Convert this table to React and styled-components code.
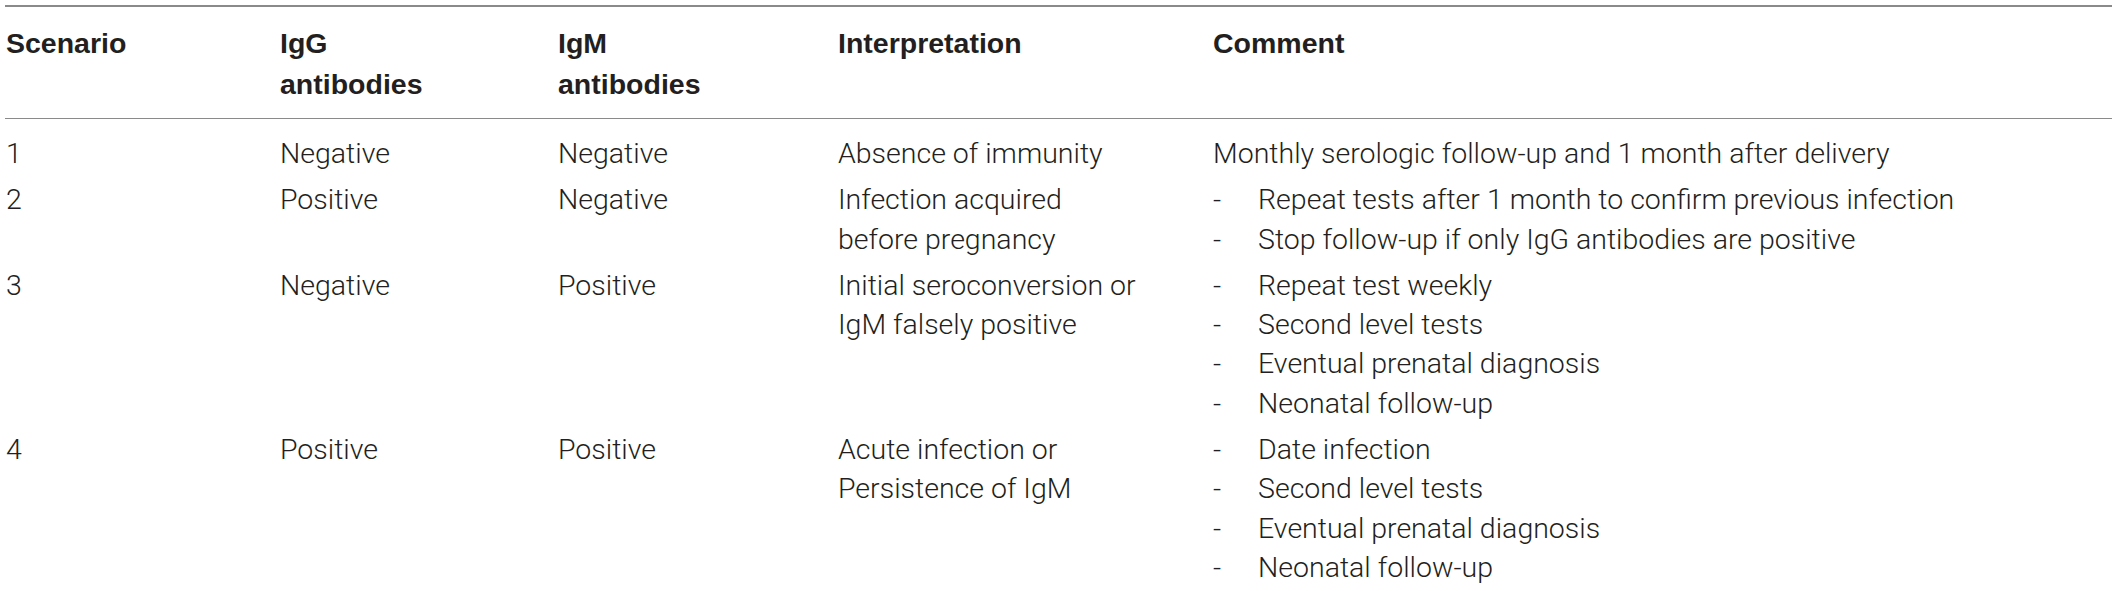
import styled, { createGlobalStyle } from 'styled-components';

const GlobalStyle = createGlobalStyle`
  html, body {
    margin: 0;
    padding: 0;
    background: #fff;
  }
`;

const rows = [
  {
    scenario: '1',
    igg: 'Negative',
    igm: 'Negative',
    interpretation: ['Absence of immunity'],
    comment: 'Monthly serologic follow-up and 1 month after delivery',
  },
  {
    scenario: '2',
    igg: 'Positive',
    igm: 'Negative',
    interpretation: ['Infection acquired', 'before pregnancy'],
    comment: [
      'Repeat tests after 1 month to confirm previous infection',
      'Stop follow-up if only IgG antibodies are positive',
    ],
  },
  {
    scenario: '3',
    igg: 'Negative',
    igm: 'Positive',
    interpretation: ['Initial seroconversion or', 'IgM falsely positive'],
    comment: [
      'Repeat test weekly',
      'Second level tests',
      'Eventual prenatal diagnosis',
      'Neonatal follow-up',
    ],
  },
  {
    scenario: '4',
    igg: 'Positive',
    igm: 'Positive',
    interpretation: ['Acute infection or', 'Persistence of IgM'],
    comment: [
      'Date infection',
      'Second level tests',
      'Eventual prenatal diagnosis',
      'Neonatal follow-up',
    ],
  },
];

function App() {
  return (
    <Page>
      <GlobalStyle />
      <Table>
        <colgroup>
          <Col width={274} />
          <Col width={278} />
          <Col width={280} />
          <Col width={375} />
          <Col />
        </colgroup>
        <thead>
          <tr>
            <HeadCell>Scenario</HeadCell>
            <HeadCell>IgG<br />antibodies</HeadCell>
            <HeadCell>IgM<br />antibodies</HeadCell>
            <HeadCell>Interpretation</HeadCell>
            <HeadCell>Comment</HeadCell>
          </tr>
        </thead>
        <tbody>
          {rows.map((row, i) => (
            <Row key={row.scenario} first={i === 0}>
              <Cell>{row.scenario}</Cell>
              <Cell>{row.igg}</Cell>
              <Cell>{row.igm}</Cell>
              <Cell>
                {row.interpretation.map((line) => (
                  <Line key={line}>{line}</Line>
                ))}
              </Cell>
              <Cell>
                {Array.isArray(row.comment) ? (
                  <List>
                    {row.comment.map((item, j) => (
                      <Item key={j}>
                        <Dash>-</Dash>
                        <span>{item}</span>
                      </Item>
                    ))}
                  </List>
                ) : (
                  row.comment
                )}
              </Cell>
            </Row>
          ))}
        </tbody>
      </Table>
    </Page>
  );
}

export default App;

const Page = styled.div`
  padding: 5px 5px 0 5px;
`;

const Table = styled.table`
  width: 2107px;
  border-collapse: collapse;
  table-layout: fixed;
  border-top: 2px solid #8a8a8a;
  color: #231f20;
`;

const Col = styled.col`
  width: ${({ width }) => (width ? `${width}px` : 'auto')};
`;

const HeadCell = styled.th`
  text-align: left;
  vertical-align: top;
  font-family: "Liberation Sans", Arial, sans-serif;
  font-weight: 700;
  font-size: 28.5px;
  line-height: 41px;
  padding: 16px 0 13px 1px;
  border-bottom: 1px solid #8a8a8a;
`;

const Row = styled.tr`
  td {
    padding-top: ${({ first }) => (first ? '15px' : '3.5px')};
  }
`;

const Cell = styled.td`
  vertical-align: top;
  font-family: Roboto, "Liberation Sans", sans-serif;
  font-weight: 300;
  font-size: 28.5px;
  line-height: 39.3px;
  padding: 3.5px 0 3.5px 1px;
`;

const Line = styled.div``;

const List = styled.div`
  display: flex;
  flex-direction: column;
`;

const Item = styled.div`
  display: flex;
`;

const Dash = styled.span`
  width: 45px;
  flex-shrink: 0;
`;
